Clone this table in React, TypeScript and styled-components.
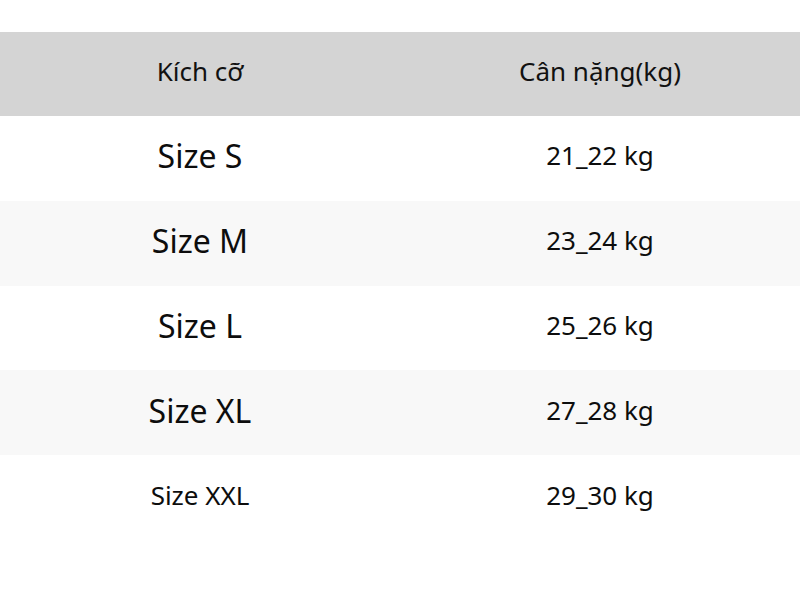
import React from "react";
import styled, { createGlobalStyle } from "styled-components";

const GlobalBody = createGlobalStyle`
  html, body {
    margin: 0;
    padding: 0;
    background: #ffffff;
  }
  body {
    font-family: "Noto Sans", "Open Sans", sans-serif;
    color: #111111;
  }
`;

const sizes = [
  { name: "Size S", weight: "21_22 kg", big: true },
  { name: "Size M", weight: "23_24 kg", big: true },
  { name: "Size L", weight: "25_26 kg", big: true },
  { name: "Size XL", weight: "27_28 kg", big: true },
  { name: "Size XXL", weight: "29_30 kg", big: false },
];

const App = () => {
  return (
    <>
      <GlobalBody />
      <Page>
        <Table>
          <HeadRow>
            <HeadCell>Kích cỡ</HeadCell>
            <HeadCell>Cân nặng(kg)</HeadCell>
          </HeadRow>
          {sizes.map((item, i) => (
            <Row key={item.name} $striped={i % 2 === 1}>
              <SizeCell $big={item.big}>{item.name}</SizeCell>
              <ValueCell>{item.weight}</ValueCell>
            </Row>
          ))}
        </Table>
      </Page>
    </>
  );
};

const Page = styled.div`
  width: 800px;
  height: 608px;
  padding-top: 32px;
  box-sizing: border-box;
  background: #ffffff;
`;

const Table = styled.div`
  display: flex;
  flex-direction: column;
  width: 100%;
`;

const HeadRow = styled.div`
  display: grid;
  grid-template-columns: 1fr 1fr;
  height: 84px;
  align-items: center;
  background-color: #d4d4d4;
`;

const HeadCell = styled.div`
  text-align: center;
  font-size: 26px;
  line-height: 1;
  color: #111111;
  padding-bottom: 6px;
`;

const Row = styled.div<{ $striped: boolean }>`
  display: grid;
  grid-template-columns: 1fr 1fr;
  height: 84.8px;
  align-items: center;
  background-color: ${(p) => (p.$striped ? "#f8f8f8" : "#ffffff")};
`;

const SizeCell = styled.div<{ $big: boolean }>`
  text-align: center;
  font-size: ${(p) => (p.$big ? "32px" : "26px")};
  line-height: 1;
  color: #0d0d0d;
  padding-bottom: ${(p) => (p.$big ? "4px" : "6px")};
`;

const ValueCell = styled.div`
  text-align: center;
  font-size: 26px;
  line-height: 1;
  color: #0d0d0d;
  padding-bottom: 6px;
`;

export default App;
